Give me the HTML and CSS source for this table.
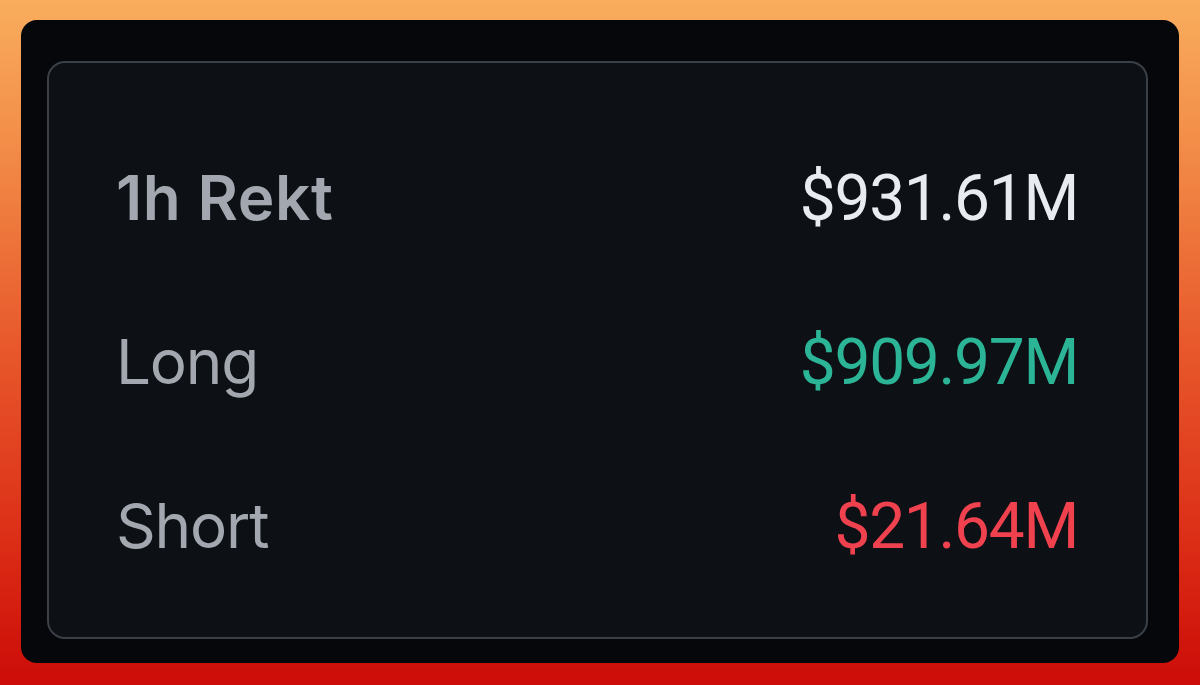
FILE: index.html
```html
<!DOCTYPE html>
<html>
<head>
<meta charset="utf-8">
<link rel="stylesheet" href="styles.css">
</head>
<body>
<div class="panel">
  <div class="card">
    <div class="row">
      <span class="label label-strong">1h Rekt</span>
      <span class="value value-total">$931.61M</span>
    </div>
    <div class="row">
      <span class="label">Long</span>
      <span class="value value-long">$909.97M</span>
    </div>
    <div class="row">
      <span class="label">Short</span>
      <span class="value value-short">$21.64M</span>
    </div>
  </div>
</div>
</body>
</html>
```

FILE: styles.css
```css
html, body {
  margin: 0;
  padding: 0;
}
body {
  width: 1200px;
  height: 685px;
  background: linear-gradient(to bottom, #f9ad5d 0%, #f28b47 22%, #e8592c 50%, #dc2f17 78%, #cc0c08 100%);
  box-sizing: border-box;
  padding: 20px 21px 22px 21px;
  font-family: Inter, "Liberation Sans", sans-serif;
}
.panel {
  height: 643px;
  background: #05070b;
  border-radius: 16px;
  box-sizing: border-box;
  padding: 41px 31px 24px 26px;
}
.card {
  height: 578px;
  box-sizing: border-box;
  background: #0d1115;
  border: 2px solid #3a3f48;
  border-radius: 18px;
  padding: 95px 68px 0 67px;
  display: flex;
  flex-direction: column;
  gap: 84px;
}
.row {
  display: flex;
  justify-content: space-between;
  align-items: baseline;
  height: 80px;
  line-height: 80px;
}
.label {
  font-size: 62px;
  color: #a3a8b0;
  font-weight: 400;
  letter-spacing: -1.2px;
}
.label-strong {
  font-weight: 600;
  letter-spacing: 0.6px;
}
.value {
  font-family: Roboto, "Liberation Sans", sans-serif;
  font-size: 64px;
  letter-spacing: -1.3px;
  font-weight: 400;
}
.value-total { color: #e8ebef; }
.value-long { color: #2bb596; }
.value-short { color: #f0414e; }
```
